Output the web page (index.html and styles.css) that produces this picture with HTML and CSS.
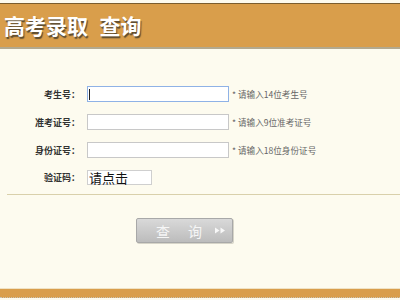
FILE: index.html
```html
<!DOCTYPE html>
<html lang="zh">
<head>
<meta charset="utf-8">
<link rel="stylesheet" href="styles.css">
</head>
<body>
<div class="topgap"></div>
<header class="header">
  <h1 class="title">高考录取&nbsp;&nbsp;查询</h1>
</header>
<main class="form">
  <div class="row">
    <label class="label">考生号：</label>
    <span class="input focus"><span class="caret"></span></span>
    <span class="hint">* 请输入14位考生号</span>
  </div>
  <div class="row">
    <label class="label">准考证号：</label>
    <span class="input"></span>
    <span class="hint">* 请输入9位准考证号</span>
  </div>
  <div class="row">
    <label class="label">身份证号：</label>
    <span class="input"></span>
    <span class="hint">* 请输入18位身份证号</span>
  </div>
  <div class="row">
    <label class="label">验证码：</label>
    <span class="captcha">请点击</span>
  </div>
  <div class="divider"></div>
  <div class="btnrow">
    <button class="btn"><span class="btntext">查</span><span class="btntext">询</span><svg class="arrows" width="11" height="7" viewBox="0 0 11 7"><path d="M0 0.5L4.5 3.5L0 6.5Z M5.5 0.5L10 3.5L5.5 6.5Z" fill="#f8f8f8"/></svg></button>
  </div>
</main>
<footer class="footer"></footer>
</body>
</html>
```
FILE: styles.css
```css
html, body {
  margin: 0;
  padding: 0;
}
body {
  width: 400px;
  height: 300px;
  overflow: hidden;
  background: #fdfbef;
  font-family: "Noto Sans CJK SC", "Liberation Sans", sans-serif;
}
.topgap {
  height: 3px;
  background: #fdfbef;
}
.header {
  height: 43px;
  background: #d99e4b;
  border-top: 1px solid #7b5d2e;
  border-bottom: 2px solid #b3a98e;
  display: flex;
  align-items: center;
}
.title {
  margin: 0 0 0 4px;
  font-size: 21px;
  font-weight: bold;
  color: #fff;
  letter-spacing: 0;
  word-spacing: 1px;
  text-shadow: 1px 2px 1px #5a4a30;
  line-height: 1;
}
.form {
  padding-top: 37px;
  height: 202px;
}
.row {
  display: flex;
  align-items: center;
  height: 16px;
  margin-bottom: 12px;
}
.row:nth-child(4) {
  margin-top: 1px;
  height: 15px;
  margin-bottom: 0;
}
.label {
  width: 80px;
  text-align: right;
  font-size: 9px;
  font-weight: bold;
  color: #333;
  margin-right: 7px;
}
.input {
  width: 140px;
  height: 14px;
  background: #fff;
  border: 1px solid #c8c8c8;
  display: flex;
  align-items: center;
}
.input.focus {
  border-color: #8fb2e6;
}
.caret {
  width: 1px;
  height: 11px;
  margin-left: 1px;
  background: #222;
}
.hint {
  margin-left: 3px;
  font-size: 8.6px;
  color: #666;
}
.captcha {
  width: 62px;
  height: 13px;
  background: #fff;
  border: 1px solid #cfcfcf;
  font-family: "Noto Sans CJK SC", sans-serif;
  font-size: 13px;
  line-height: 13px;
  color: #111;
  padding-left: 1px;
}
.divider {
  margin: 9px 0 0 7px;
  height: 1px;
  background: #d9d0ab;
}
.btnrow {
  padding: 23px 0 0 136px;
}
.btn {
  width: 97px;
  height: 25px;
  border: 1px solid #a8a8a8;
  border-radius: 2px;
  background: linear-gradient(#d9d9d9, #bcbcbc);
  box-shadow: 1px 1px 0 #d6d4c8;
  display: flex;
  align-items: center;
  padding: 0 0 0 19px;
  color: #f6f6f6;
  font-family: "Noto Sans CJK SC", sans-serif;
  font-size: 14px;
}
.btntext {
  margin-right: 18px;
}
.btntext + .btntext {
  margin-right: 13px;
}
.arrows {
  display: block;
}
.footer {
  height: 8px;
  border-top: 1px solid #f0e2c4;
  background: #d99e4b;
  border-bottom: 1px dotted #c9c2b0;
}
```
